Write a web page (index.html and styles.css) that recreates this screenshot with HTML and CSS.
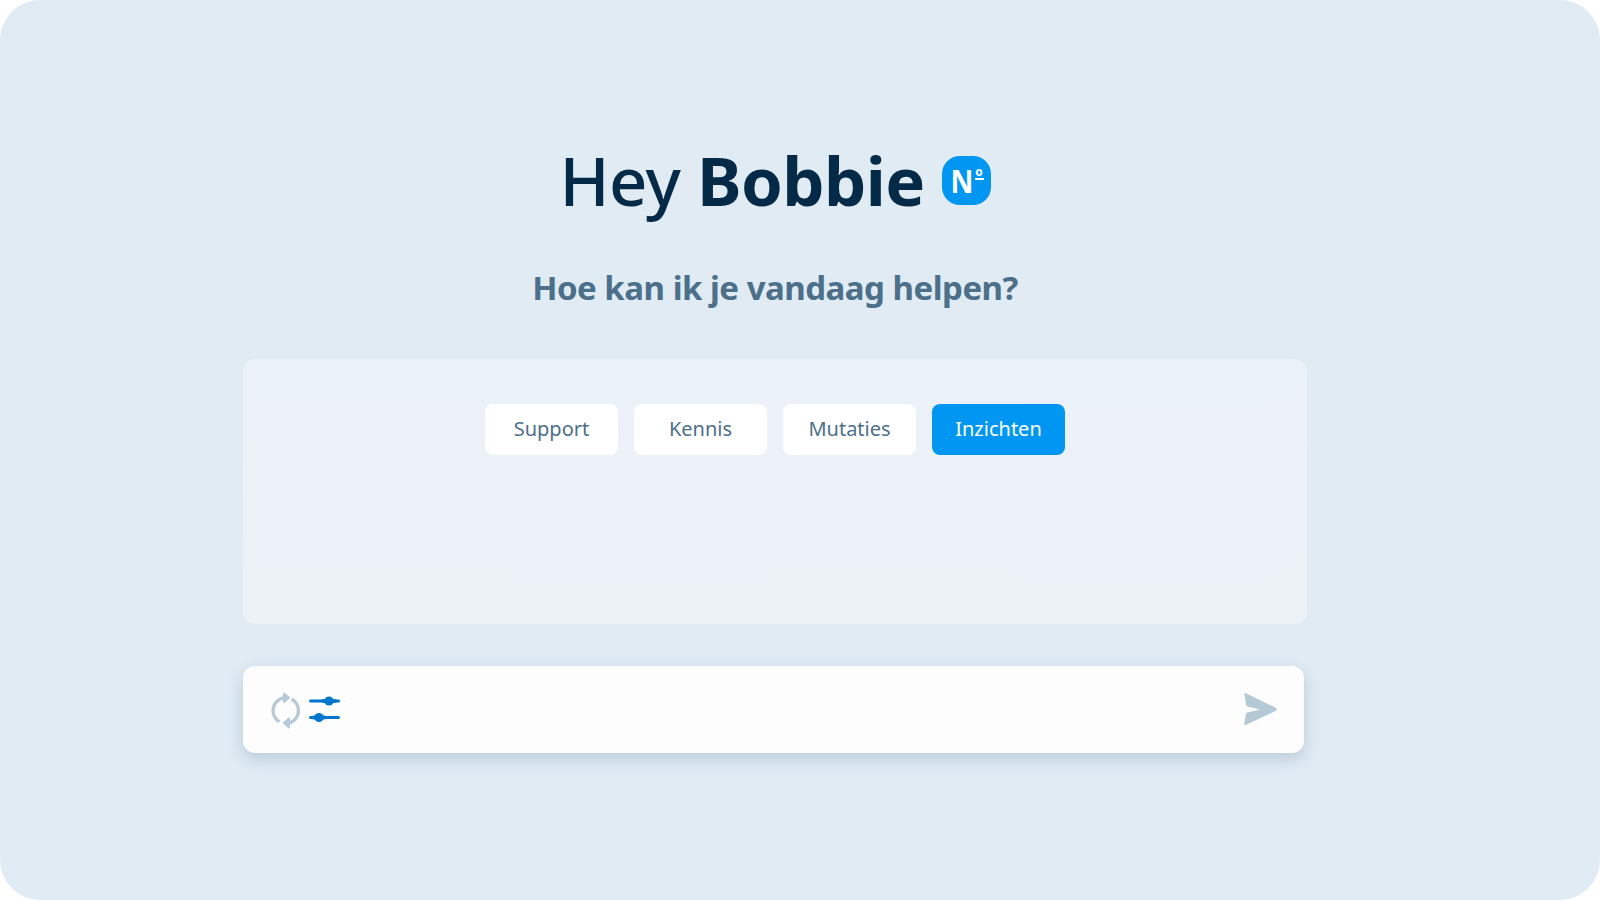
FILE: index.html
```html
<!DOCTYPE html>
<html lang="nl">
<head>
<meta charset="utf-8">
<title>Hey Bobbie</title>
<link rel="stylesheet" href="styles.css">
</head>
<body>
<main class="frame">
  <h1 class="title"><span class="greeting">Hey <b>Bobbie</b></span>
    <span class="badge"><span class="badge-n">N</span><span class="ordinal">o</span></span>
  </h1>
  <h2 class="subtitle">Hoe kan ik je vandaag helpen?</h2>
  <section class="panel">
    <div class="tabs">
      <button class="tab">Support</button>
      <button class="tab">Kennis</button>
      <button class="tab">Mutaties</button>
      <button class="tab active">Inzichten</button>
    </div>
  </section>
  <div class="inputbar">
    <svg class="icon-refresh" width="32" height="38" viewBox="0 0 32 38" fill="none" stroke="#b7c9d6" stroke-width="3.400" stroke-linejoin="round">
      <path d="M13 6.800A13 13 0 0 0 8.500 30.800"/>
      <path d="M20.500 8A13 13 0 0 1 16.500 32.400"/>
      <path d="M13 2.500l5 4.300-5 4.300z" fill="#b7c9d6" stroke-width="2"/>
      <path d="M18 27.500l-5 4.500 5 4.500z" fill="#b7c9d6" stroke-width="2"/>
    </svg>
    <svg class="icon-sliders" width="31" height="27" viewBox="0 0 31 27" fill="#0077cc">
      <rect x="0" y="3.500" width="31" height="3" rx="1.500"/>
      <ellipse cx="20" cy="5" rx="9" ry="2.600"/>
      <circle cx="20" cy="5" r="4.600"/>
      <rect x="0" y="20" width="31" height="3" rx="1.500"/>
      <ellipse cx="10" cy="21.500" rx="9" ry="2.600"/>
      <circle cx="10" cy="21.500" r="4.600"/>
    </svg>
    <svg class="icon-send" width="34" height="33" viewBox="0 0 34 33" fill="#b4c8d6">
      <path d="M1.500 1.200C1 .5 1.800-.2 2.800.2L32.800 14.800c1.300.7 1.300 2.200 0 2.900L2.800 32c-1 .4-1.800-.2-1.600-1.200L3 21c.1-.8.600-1.300 1.400-1.500L17 16.500 4.400 13.500C3.600 13.300 3.100 12.800 3 12z"/>
    </svg>
  </div>
</main>
</body>
</html>
```

FILE: styles.css
```css
* { box-sizing: border-box; }
html, body { margin: 0; height: 100%; background: #fff; }
.frame {
  width: 1600px;
  height: 900px;
  background: #e0ebf4;
  border-radius: 40px;
  padding: 140px 243px 0;
  display: flex;
  flex-direction: column;
  font-family: "Noto Sans", sans-serif;
}
.title {
  margin: 0;
  height: 81px;
  width: 1064px;
  display: flex;
  justify-content: center;
  align-items: center;
  gap: 17px;
  font-size: 67px;
  font-weight: 500;
  color: #042a47;
  line-height: 80px;
  letter-spacing: -0.6px;
}
.greeting { padding-bottom: 2px; }
.title b { font-weight: 700; }
.badge {
  position: relative;
  width: 49px;
  height: 49px;
  border-radius: 18px;
  background: #0096f2;
  color: #fff;
  font-size: 32px;
  font-weight: 700;
  line-height: 49px;
  letter-spacing: 0;
  display: flex;
  justify-content: center;
  align-items: center;
}
.badge-n {
  display: block;
  margin-right: 9px;
  transform: scaleX(.88);
}
.ordinal {
  position: absolute;
  left: 33px;
  top: 11px;
  width: 9px;
  height: 13px;
  font-size: 12px;
  line-height: 10px;
  text-align: center;
  border-bottom: 2px solid #fff;
}
.subtitle {
  margin: 45px 0 0;
  width: 1064px;
  height: 44px;
  text-align: center;
  font-size: 33px;
  line-height: 44px;
  font-weight: 700;
  color: #4c6f8a;
  letter-spacing: -0.5px;
}
.panel {
  margin-top: 49px;
  width: 1064px;
  height: 265px;
  background: linear-gradient(#ebf1f8, #ecf2f6);
  border-radius: 12px;
  padding-top: 45px;
}
.tabs {
  display: flex;
  justify-content: center;
  gap: 16px;
}
.tab {
  width: 133px;
  height: 51px;
  border: 0;
  border-radius: 8px;
  background: #fff;
  color: #4d6f8a;
  font-family: "Noto Sans", sans-serif;
  font-size: 20px;
  padding: 0 0 2px;
}
.tab.active { background: #0096f2; color: #fff; }
.inputbar {
  margin-top: 42px;
  width: 1061px;
  height: 87px;
  background: #fdfdfd;
  border-radius: 12px;
  box-shadow: 0 6px 16px rgba(60, 90, 120, .22);
  display: flex;
  align-items: center;
  padding: 0 27px 0 28px;
}
.icon-refresh { margin-right: 6px; }
.icon-send { margin-left: auto; }
```
